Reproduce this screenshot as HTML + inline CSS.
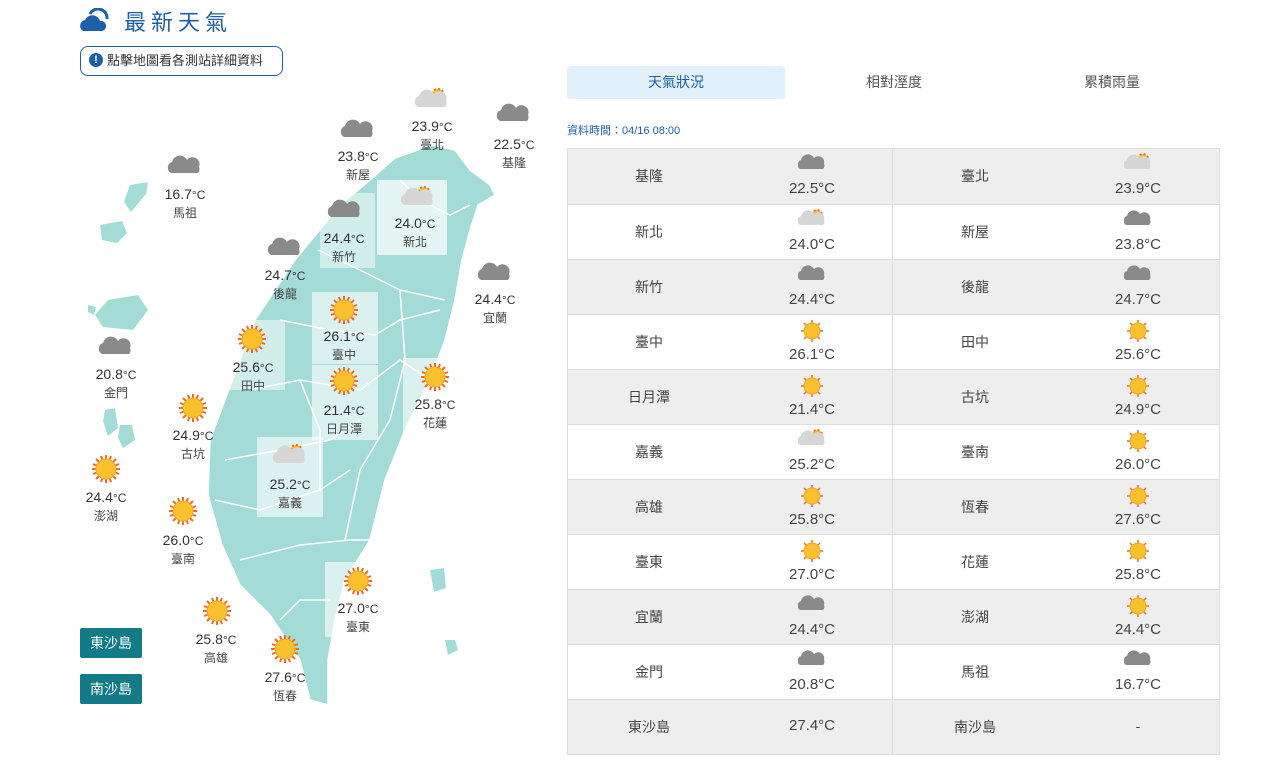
<!DOCTYPE html>
<html><head><meta charset="utf-8"><style>
body{margin:0;width:1273px;height:773px;background:#fff;font-family:"Liberation Sans","Noto Sans CJK TC",sans-serif;position:relative;overflow:hidden;color:#444}
.abs{position:absolute}
.title{left:124px;top:5px;font-size:22px;color:#1d5fa8;letter-spacing:5px}
.btn{left:80px;top:46px;width:203px;height:30px;border:1.5px solid #1d5fa8;border-radius:8px;box-sizing:border-box;font-size:13px;color:#333;line-height:27px;padding-left:26px}
.btn i{position:absolute;left:8px;top:6px;width:14px;height:14px;border-radius:50%;background:#1d5fa8;color:#fff;font-style:normal;font-size:11px;line-height:14px;text-align:center;font-weight:bold}
.tab{top:66px;height:33px;width:218px;text-align:center;line-height:33px;font-size:14px;color:#555}
.lab{text-align:center;font-size:14px;color:#333;line-height:18px;width:70px}
.lab small{font-size:12px}
.lab div{font-size:12px;color:#444}
.isl{left:80px;width:62px;height:30px;background:#137b87;color:#fff;font-size:14px;text-align:center;line-height:30px;border-radius:2px}
.tbl{position:absolute;left:567px;top:148px;width:653px;border:1px solid #ddd;box-sizing:border-box}
.row{position:relative;height:55px;border-top:1px solid #ddd;box-sizing:border-box}
.row:first-child{border-top:none}
.row:nth-child(odd){background:#eee}
.row span{position:absolute;font-size:14px;line-height:16px;text-align:center;width:162px}
.n1{left:0;top:19px}.n2{left:326px;top:19px}
.v1{left:163px}.v2{left:489px}
.ic{top:4px;height:18px}.t{top:31px;font-size:15px!important;line-height:18px!important}
.mid{position:absolute;left:324px;top:0;width:1px;height:100%;background:#ddd}
</style></head><body>
<svg class="abs" style="left:80px;top:8px" width="30" height="24" viewBox="0 0 30 24"><path d="M10 6a9 9 0 0 1 17 5" stroke="#1d5fa8" stroke-width="3" fill="none"/><path d="M3 23a6 6 0 0 1 2-11a8 8 0 0 1 15 1a5 5 0 0 1 2 10z" fill="#1d5fa8"/></svg>
<div class="abs title">最新天氣</div>
<div class="abs btn"><i>!</i>點擊地圖看各測站詳細資料</div>

<div class="abs tab" style="left:567px;background:#e2f0fb;color:#1d5fa8;border-radius:3px">天氣狀況</div>
<div class="abs tab" style="left:785px">相對溼度</div>
<div class="abs tab" style="left:1003px">累積雨量</div>
<div class="abs" style="left:567px;top:122px;font-size:11px;color:#1d5fa8">資料時間：04/16 08:00</div>

<svg class="abs" style="left:0;top:0" width="560" height="773">
<defs>
<g id="sun"><g stroke="#f26a21" stroke-width="2"><path d="M0-14V14M-14 0H14M-10-10L10 10M-10 10L10-10M-5-13L5 13M5-13L-5 13M-13-5L13 5M-13 5L13-5"/></g><circle r="10" fill="#fbc02d" stroke="#f5a623"/></g>
<g id="cld"><path d="M-14 7a6 6 0 0 1 1-11a8 8 0 0 1 15-2a7 7 0 0 1 12 7a5 5 0 0 1-1 6z" fill="#8a8a8a"/></g>
<g id="pcld"><circle cx="6" cy="-5" r="6" fill="#fbc02d" stroke="#f26a21" stroke-dasharray="2 2" stroke-width="2"/><path d="M-14 7a6 6 0 0 1 1-11a8 8 0 0 1 15-2a7 7 0 0 1 12 7a5 5 0 0 1-1 6z" fill="#d6d6d6"/></g>
<g id="s2"><g stroke="#f26a21" stroke-width="1.5"><path d="M0-11V11M-11 0H11M-8-8L8 8M-8 8L8-8"/></g><circle r="8" fill="#fbc02d" stroke="#f5a623"/></g>
<g id="c2"><path d="M-12 6a5 5 0 0 1 1-9a7 7 0 0 1 13-2a6 6 0 0 1 10 6a4 4 0 0 1-1 5z" fill="#8a8a8a"/></g>
<g id="p2"><circle cx="5" cy="-4" r="5" fill="#fbc02d" stroke="#f26a21" stroke-dasharray="2 2" stroke-width="2"/><path d="M-12 6a5 5 0 0 1 1-9a7 7 0 0 1 13-2a6 6 0 0 1 10 6a4 4 0 0 1-1 5z" fill="#d6d6d6"/></g>
</defs>
<path fill="#a3dcd6" stroke="#fff" stroke-width="1.5" d="M432 145L455 150L470 170L490 185L495 195L478 205L470 230L462 260L455 300L445 340L430 380L405 430L385 480L370 540L345 580L335 620L328 660L328 705L310 700L300 660L270 615L240 585L222 545L208 495L210 440L225 400L240 360L255 320L275 290L295 260L318 232L340 205L370 180L395 158Z"/>
<g stroke="#fff" stroke-width="1.5" fill="none"><path d="M400 180L420 200L450 215L470 205M318 250L360 270L400 290L445 300M280 320L330 330L375 335L400 320L440 310M250 390L300 380L360 390L400 360L430 380M225 460L280 450L330 440L360 420M215 500L260 510L320 490L350 470M240 560L300 545L350 540L370 540M280 620L300 600L330 600M400 290L405 360L390 420L360 470L345 540M300 380L320 430L320 490"/></g>
<path fill="#a3dcd6" d="M130 185l18-3-2 12-15 18-7-10zM100 225l22-4 5 12-10 10-15-3zM108 300l30-5 10 15-15 20-30-3-8-12zM88 305l8 2-2 8-6-3zM105 410l10-2 3 20-10 8-5-15zM120 425l12 0 3 15-12 8-5-10zM430 570l14-2 2 20-12 4zM445 640l10 0 3 10-10 5z"/>
<rect x="377" y="180" width="70" height="75" fill="#fff" opacity=".7"/><rect x="320" y="193" width="55" height="75" fill="#fff" opacity=".5"/>
<rect x="312" y="292" width="66" height="72" fill="#fff" opacity=".6"/><rect x="312" y="365" width="66" height="75" fill="#fff" opacity=".6"/>
<rect x="403" y="358" width="66" height="75" fill="#fff" opacity=".6"/><rect x="257" y="437" width="66" height="80" fill="#fff" opacity=".6"/>
<rect x="325" y="562" width="66" height="75" fill="#fff" opacity=".6"/><rect x="227" y="320" width="58" height="70" fill="#fff" opacity=".5"/>
<use href="#pcld" x="432" y="100"/><use href="#cld" x="514" y="114"/><use href="#cld" x="358" y="130"/><use href="#cld" x="185" y="166"/>
<use href="#pcld" x="418" y="198"/><use href="#cld" x="345" y="210"/><use href="#cld" x="285" y="248"/><use href="#cld" x="495" y="273"/>
<use href="#sun" x="344" y="310"/><use href="#sun" x="252" y="339"/><use href="#cld" x="116" y="347"/><use href="#sun" x="344" y="381"/>
<use href="#sun" x="435" y="377"/><use href="#sun" x="193" y="408"/><use href="#pcld" x="290" y="456"/><use href="#sun" x="106" y="469"/>
<use href="#sun" x="183" y="511"/><use href="#sun" x="358" y="581"/><use href="#sun" x="217" y="611"/><use href="#sun" x="285" y="649"/>
</svg>
<div class="abs lab" style="left:397px;top:117px">23.9<small>°C</small><div>臺北</div></div>
<div class="abs lab" style="left:479px;top:135px">22.5<small>°C</small><div>基隆</div></div>
<div class="abs lab" style="left:323px;top:147px">23.8<small>°C</small><div>新屋</div></div>
<div class="abs lab" style="left:150px;top:185px">16.7<small>°C</small><div>馬祖</div></div>
<div class="abs lab" style="left:380px;top:214px">24.0<small>°C</small><div>新北</div></div>
<div class="abs lab" style="left:309px;top:229px">24.4<small>°C</small><div>新竹</div></div>
<div class="abs lab" style="left:250px;top:266px">24.7<small>°C</small><div>後龍</div></div>
<div class="abs lab" style="left:460px;top:290px">24.4<small>°C</small><div>宜蘭</div></div>
<div class="abs lab" style="left:309px;top:327px">26.1<small>°C</small><div>臺中</div></div>
<div class="abs lab" style="left:218px;top:358px">25.6<small>°C</small><div>田中</div></div>
<div class="abs lab" style="left:81px;top:365px">20.8<small>°C</small><div>金門</div></div>
<div class="abs lab" style="left:309px;top:401px">21.4<small>°C</small><div>日月潭</div></div>
<div class="abs lab" style="left:400px;top:395px">25.8<small>°C</small><div>花蓮</div></div>
<div class="abs lab" style="left:158px;top:426px">24.9<small>°C</small><div>古坑</div></div>
<div class="abs lab" style="left:255px;top:475px">25.2<small>°C</small><div>嘉義</div></div>
<div class="abs lab" style="left:71px;top:488px">24.4<small>°C</small><div>澎湖</div></div>
<div class="abs lab" style="left:148px;top:531px">26.0<small>°C</small><div>臺南</div></div>
<div class="abs lab" style="left:323px;top:599px">27.0<small>°C</small><div>臺東</div></div>
<div class="abs lab" style="left:181px;top:630px">25.8<small>°C</small><div>高雄</div></div>
<div class="abs lab" style="left:250px;top:668px">27.6<small>°C</small><div>恆春</div></div>
<div class="abs isl" style="top:628px">東沙島</div>
<div class="abs isl" style="top:674px">南沙島</div>

<div class="tbl">
<div class="row"><span class="n1">基隆</span><span class="v1 ic"><svg width="28" height="20" viewBox="-14 -10 28 20"><use href="#c2"/></svg></span><span class="v1 t">22.5°C</span><span class="n2">臺北</span><span class="v2 ic"><svg width="28" height="20" viewBox="-14 -10 28 20"><use href="#p2"/></svg></span><span class="v2 t">23.9°C</span></div>
<div class="row"><span class="n1">新北</span><span class="v1 ic"><svg width="28" height="20" viewBox="-14 -10 28 20"><use href="#p2"/></svg></span><span class="v1 t">24.0°C</span><span class="n2">新屋</span><span class="v2 ic"><svg width="28" height="20" viewBox="-14 -10 28 20"><use href="#c2"/></svg></span><span class="v2 t">23.8°C</span></div>
<div class="row"><span class="n1">新竹</span><span class="v1 ic"><svg width="28" height="20" viewBox="-14 -10 28 20"><use href="#c2"/></svg></span><span class="v1 t">24.4°C</span><span class="n2">後龍</span><span class="v2 ic"><svg width="28" height="20" viewBox="-14 -10 28 20"><use href="#c2"/></svg></span><span class="v2 t">24.7°C</span></div>
<div class="row"><span class="n1">臺中</span><span class="v1 ic"><svg width="28" height="24" viewBox="-14 -12 28 24"><use href="#s2"/></svg></span><span class="v1 t">26.1°C</span><span class="n2">田中</span><span class="v2 ic"><svg width="28" height="24" viewBox="-14 -12 28 24"><use href="#s2"/></svg></span><span class="v2 t">25.6°C</span></div>
<div class="row"><span class="n1">日月潭</span><span class="v1 ic"><svg width="28" height="24" viewBox="-14 -12 28 24"><use href="#s2"/></svg></span><span class="v1 t">21.4°C</span><span class="n2">古坑</span><span class="v2 ic"><svg width="28" height="24" viewBox="-14 -12 28 24"><use href="#s2"/></svg></span><span class="v2 t">24.9°C</span></div>
<div class="row"><span class="n1">嘉義</span><span class="v1 ic"><svg width="28" height="20" viewBox="-14 -10 28 20"><use href="#p2"/></svg></span><span class="v1 t">25.2°C</span><span class="n2">臺南</span><span class="v2 ic"><svg width="28" height="24" viewBox="-14 -12 28 24"><use href="#s2"/></svg></span><span class="v2 t">26.0°C</span></div>
<div class="row"><span class="n1">高雄</span><span class="v1 ic"><svg width="28" height="24" viewBox="-14 -12 28 24"><use href="#s2"/></svg></span><span class="v1 t">25.8°C</span><span class="n2">恆春</span><span class="v2 ic"><svg width="28" height="24" viewBox="-14 -12 28 24"><use href="#s2"/></svg></span><span class="v2 t">27.6°C</span></div>
<div class="row"><span class="n1">臺東</span><span class="v1 ic"><svg width="28" height="24" viewBox="-14 -12 28 24"><use href="#s2"/></svg></span><span class="v1 t">27.0°C</span><span class="n2">花蓮</span><span class="v2 ic"><svg width="28" height="24" viewBox="-14 -12 28 24"><use href="#s2"/></svg></span><span class="v2 t">25.8°C</span></div>
<div class="row"><span class="n1">宜蘭</span><span class="v1 ic"><svg width="28" height="20" viewBox="-14 -10 28 20"><use href="#c2"/></svg></span><span class="v1 t">24.4°C</span><span class="n2">澎湖</span><span class="v2 ic"><svg width="28" height="24" viewBox="-14 -12 28 24"><use href="#s2"/></svg></span><span class="v2 t">24.4°C</span></div>
<div class="row"><span class="n1">金門</span><span class="v1 ic"><svg width="28" height="20" viewBox="-14 -10 28 20"><use href="#c2"/></svg></span><span class="v1 t">20.8°C</span><span class="n2">馬祖</span><span class="v2 ic"><svg width="28" height="20" viewBox="-14 -10 28 20"><use href="#c2"/></svg></span><span class="v2 t">16.7°C</span></div>
<div class="row"><span class="n1">東沙島</span><span class="v1" style="top:18px;font-size:15px">27.4°C</span><span class="n2">南沙島</span><span class="v2" style="top:18px">-</span></div>
<div class="mid"></div>
</div>
</body></html>
